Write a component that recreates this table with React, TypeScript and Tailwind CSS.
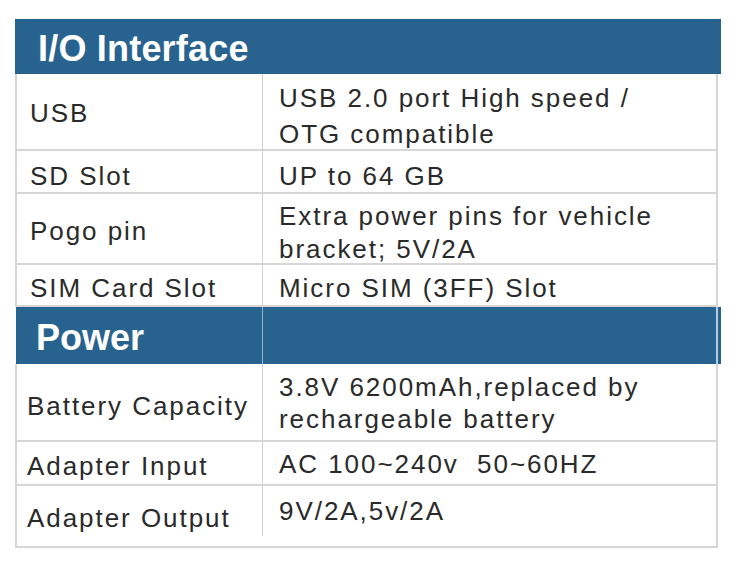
import React from 'react';

const font = { fontFamily: '"Liberation Sans", Arial, sans-serif' };

interface RowProps {
  left: string;
  right: string[];
  h: string;
  lPad: string;
  rPad: string;
  rLead?: string;
  lx?: string;
  last?: boolean;
}

const Row: React.FC<RowProps> = ({ left, right, h, lPad, rPad, rLead = 'leading-[36px]', lx = 'pl-[13px]', last }) => {
  return (
    <div className={`grid grid-cols-[246px_1fr] w-[703px] border-x-2 border-b-2 border-[#d6d6d6] ${h}`}>
      <div className={`${last ? 'h-[50px]' : ''} border-r border-[#d2d2d2] ${lx} ${lPad}`}>
        <div className="leading-[36px] whitespace-nowrap">{left}</div>
      </div>
      <div className={`pl-[16px] ${rPad} ${rLead}`}>
        {right.map((line, i) => (
          <div key={i} className="whitespace-pre">{line}</div>
        ))}
      </div>
    </div>
  );
};

const App: React.FC = () => {
  return (
    <div className="w-[741px] h-[579px] bg-white pt-[19px] pl-[15px] overflow-hidden" style={font}>
      <div className="w-[706px] text-[26px] tracking-[1.95px] text-[#2a2a2a]">
        <div className="h-[55px] bg-[#28638f] text-white font-bold text-[36px] leading-[36px] tracking-[0.2px] pl-[23px] pt-[12px]">
          I/O Interface
        </div>

        <Row left="USB" right={['USB 2.0 port High speed /', 'OTG compatible']} h="h-[77px]" lPad="pt-[21px]" rPad="pt-[6px]" />
        <Row left="SD Slot" right={['UP to 64 GB']} h="h-[43px]" lPad="pt-[7px]" rPad="pt-[7px]" />
        <Row left="Pogo pin" right={['Extra power pins for vehicle', 'bracket; 5V/2A']} h="h-[71px]" lPad="pt-[19px]" rPad="pt-[6px]" rLead="leading-[33px]" />
        <Row left="SIM Card Slot" right={['Micro SIM (3FF) Slot']} h="h-[42px]" lPad="pt-[5px]" rPad="pt-[5px]" />

        <div className="flex h-[57px]">
          <div className="w-[1px] bg-white" />
          <div className="w-[246px] bg-[#28638f] text-white font-bold text-[36px] leading-[36px] tracking-normal pl-[20px] pt-[13px]">
            Power
          </div>
          <div className="w-[1px] bg-[#8fb5d5]" />
          <div className="flex-1 bg-[#28638f]" />
          <div className="w-[2px] bg-[#b4cde2]" />
          <div className="w-[3px] bg-[#28638f]" />
        </div>

        <Row left="Battery Capacity" right={['3.8V 6200mAh,replaced by', 'rechargeable battery']} h="h-[78px]" lPad="pt-[24px]" rPad="pt-[7px]" rLead="leading-[32px]" lx="pl-[10px]" />
        <Row left="Adapter Input" right={['AC 100~240v  50~60HZ']} h="h-[44px]" lPad="pt-[6px]" rPad="pt-[4px]" lx="pl-[10px]" />
        <Row left="Adapter Output" right={['9V/2A,5v/2A']} h="h-[62px]" lPad="pt-[14px]" rPad="pt-[7px]" lx="pl-[10px]" last />
      </div>
    </div>
  );
};

export default App;
